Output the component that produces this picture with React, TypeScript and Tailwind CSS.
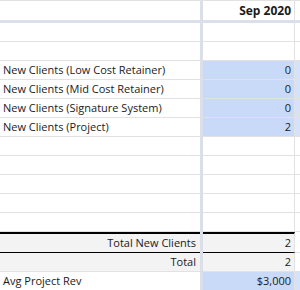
import React from "react";

type Row = {
  label?: string;
  value?: string;
  align?: "left" | "right";
  blue?: boolean;
  total?: "top" | "bottom";
};

const rows: Row[] = [
  {},
  {},
  { label: "New Clients (Low Cost Retainer)", value: "0", blue: true },
  { label: "New Clients (Mid Cost Retainer)", value: "0", blue: true },
  { label: "New Clients (Signature System)", value: "0", blue: true },
  { label: "New Clients (Project)", value: "2", blue: true },
  {},
  {},
  {},
  {},
  {},
  { label: "Total New Clients", value: "2", align: "right", total: "top" },
  { label: "Total", value: "2", align: "right", total: "bottom" },
  { label: "Avg Project Rev", value: "$3,000", blue: true },
];

function SheetRow({ row }: { row: Row }) {
  const isTop = row.total === "top";
  const cellBase = "box-border flex items-center whitespace-nowrap overflow-hidden";
  const border = isTop
    ? "h-[21px] border-t-2 border-b border-t-black border-b-black"
    : "h-[19px] border-b border-[#e2e2e2]";
  const bg = row.total ? "bg-[#f3f3f3]" : "bg-white";

  return (
    <div className="flex">
      <div
        className={`${cellBase} ${border} ${bg} w-[200px] ${
          row.align === "right" ? "justify-end pr-[4px]" : "pl-[3px]"
        }`}
      >
        {row.label}
      </div>
      <div className="w-[3px] bg-[#dadfe8]" />
      <div
        className={`${cellBase} ${border} ${
          row.blue ? "bg-[#c9daf8]" : bg
        } w-[92px] justify-end pr-[3px] border-r border-r-[#e2e2e2]`}
      >
        {row.value}
      </div>
      <div
        className={`box-border flex-1 ${isTop ? "h-[21px]" : "h-[19px]"} border-b border-[#e2e2e2] ${
          row.blue ? "bg-[#d5e2f9]" : "bg-white"
        }`}
      />
    </div>
  );
}

export default function App() {
  return (
    <div
      className="w-[300px] h-[290px] overflow-hidden bg-white text-[11px] text-[#1a1a1a]"
      style={{ fontFamily: '"Open Sans", "Noto Sans", sans-serif' }}
    >
      {/* header row */}
      <div className="flex border-t border-[#e2e2e2]">
        <div className="w-[200px] h-[19px] bg-white" />
        <div className="w-[3px] bg-[#dadfe8]" />
        <div className="box-border w-[92px] h-[19px] flex items-center justify-end pr-[3px] text-[12px] font-bold border-r border-[#e2e2e2]">
          Sep 2020
        </div>
        <div className="flex-1" />
      </div>
      {/* frozen row divider */}
      <div className="h-[3px] bg-[#dadfe8]" />
      {rows.map((r, i) => (
        <SheetRow key={i} row={r} />
      ))}
    </div>
  );
}
